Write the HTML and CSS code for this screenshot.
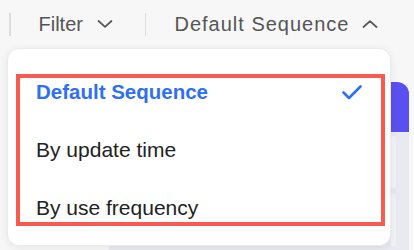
FILE: index.html
```html
<!DOCTYPE html>
<html lang="en">
<head>
  <meta charset="UTF-8">
  <meta name="viewport" content="width=device-width, initial-scale=1.0">
  <title>Sort menu</title>
  <link rel="stylesheet" href="styles.css">
</head>
<body>

  <div class="toolbar">
    <span class="divider"></span>
    <div class="tool">
      <span>Filter</span>
      <svg class="chevron" width="16" height="8" viewBox="0 0 16 8"><path d="M1.5 1 L8 6.8 L14.5 1" /></svg>
    </div>
    <span class="divider"></span>
    <div class="tool tool-sort">
      <span>Default Sequence</span>
      <svg class="chevron" width="16" height="8" viewBox="0 0 16 8"><path d="M1.5 7 L8 1.2 L14.5 7" /></svg>
    </div>
  </div>

  <div class="content">
    <div class="card">
      <div class="card-head"></div>
      <div class="card-body">
        <div class="card-strip"></div>
        <div class="card-strip"></div>
      </div>
    </div>
  </div>

  <!-- dropdown opened over the page -->
  <div class="dropdown">
    <div class="highlight">
      <div class="option active">
        <span>Default Sequence</span>
        <svg width="20" height="15" viewBox="0 0 20 15"><path d="M1.5 7.5 L7 13 L18.5 1.5" /></svg>
      </div>
      <div class="option"><span>By update time</span></div>
      <div class="option"><span>By use frequency</span></div>
    </div>
  </div>

</body>
</html>
```

FILE: styles.css
```css
* {
  box-sizing: border-box;
}
body {
  font-family: 'Liberation Sans', Arial, sans-serif;
  background: #f7f7f8;
  margin: 0;
  padding: 0;
  width: 414px;
  height: 250px;
  overflow: hidden;
  position: relative;
}
.toolbar {
  height: 48px;
  display: flex;
  align-items: center;
  padding-left: 9px;
  color: #555;
  font-size: 20px;
  line-height: 24px;
}
.divider {
  width: 1.5px;
  height: 23px;
  background: #dcdcdc;
}
.tool {
  display: flex;
  align-items: center;
  margin-left: 28px;
  margin-right: 32px;
}
.tool-sort {
  margin-left: 28px;
  margin-right: 0;
}
.tool-sort span {
  letter-spacing: 1px;
}
.chevron {
  margin-left: 14px;
  fill: none;
  stroke: #555;
  stroke-width: 1.7;
  stroke-linecap: round;
  stroke-linejoin: round;
}
.tool-sort .chevron {
  margin-left: 13px;
}
.content {
  display: flex;
  justify-content: flex-end;
  padding: 34px 5px 0 0;
}
.card {
  width: 300px;
  border-radius: 12px 12px 0 0;
  overflow: hidden;
}
.card-head {
  height: 50px;
  background: linear-gradient(90deg, #6b5ff7, #5a4ff0);
}
.card-body {
  height: 120px;
  background: #e9e9f1;
  display: flex;
  flex-direction: column;
  align-items: flex-end;
  gap: 6px;
  padding: 4px 13px 0 0;
}
.card-strip {
  width: 5px;
  height: 52px;
  border-radius: 3px;
  background: #f3f3f7;
}
.dropdown {
  position: absolute;
  left: 7px;
  top: 48px;
  width: 384px;
  height: 198px;
  padding: 25px 5px 19px 8px;
  background: #fff;
  border: 1px solid #ebebeb;
  border-radius: 12px;
  box-shadow: 0 2px 10px rgba(0, 0, 0, 0.07);
}
.highlight {
  border: 4px solid #fb5a50;
  padding: 2px 19px 2px 16px;
  display: flex;
  flex-direction: column;
  gap: 34px;
}
.option {
  display: flex;
  justify-content: space-between;
  align-items: center;
  height: 24px;
  font-size: 21px;
  line-height: 24px;
  color: #222;
}
.option.active {
  color: #2f6ff6;
  font-weight: bold;
  font-size: 20.5px;
}
.option svg {
  fill: none;
  stroke: #2f6ff6;
  stroke-width: 2.6;
  stroke-linecap: round;
  stroke-linejoin: round;
}
```
